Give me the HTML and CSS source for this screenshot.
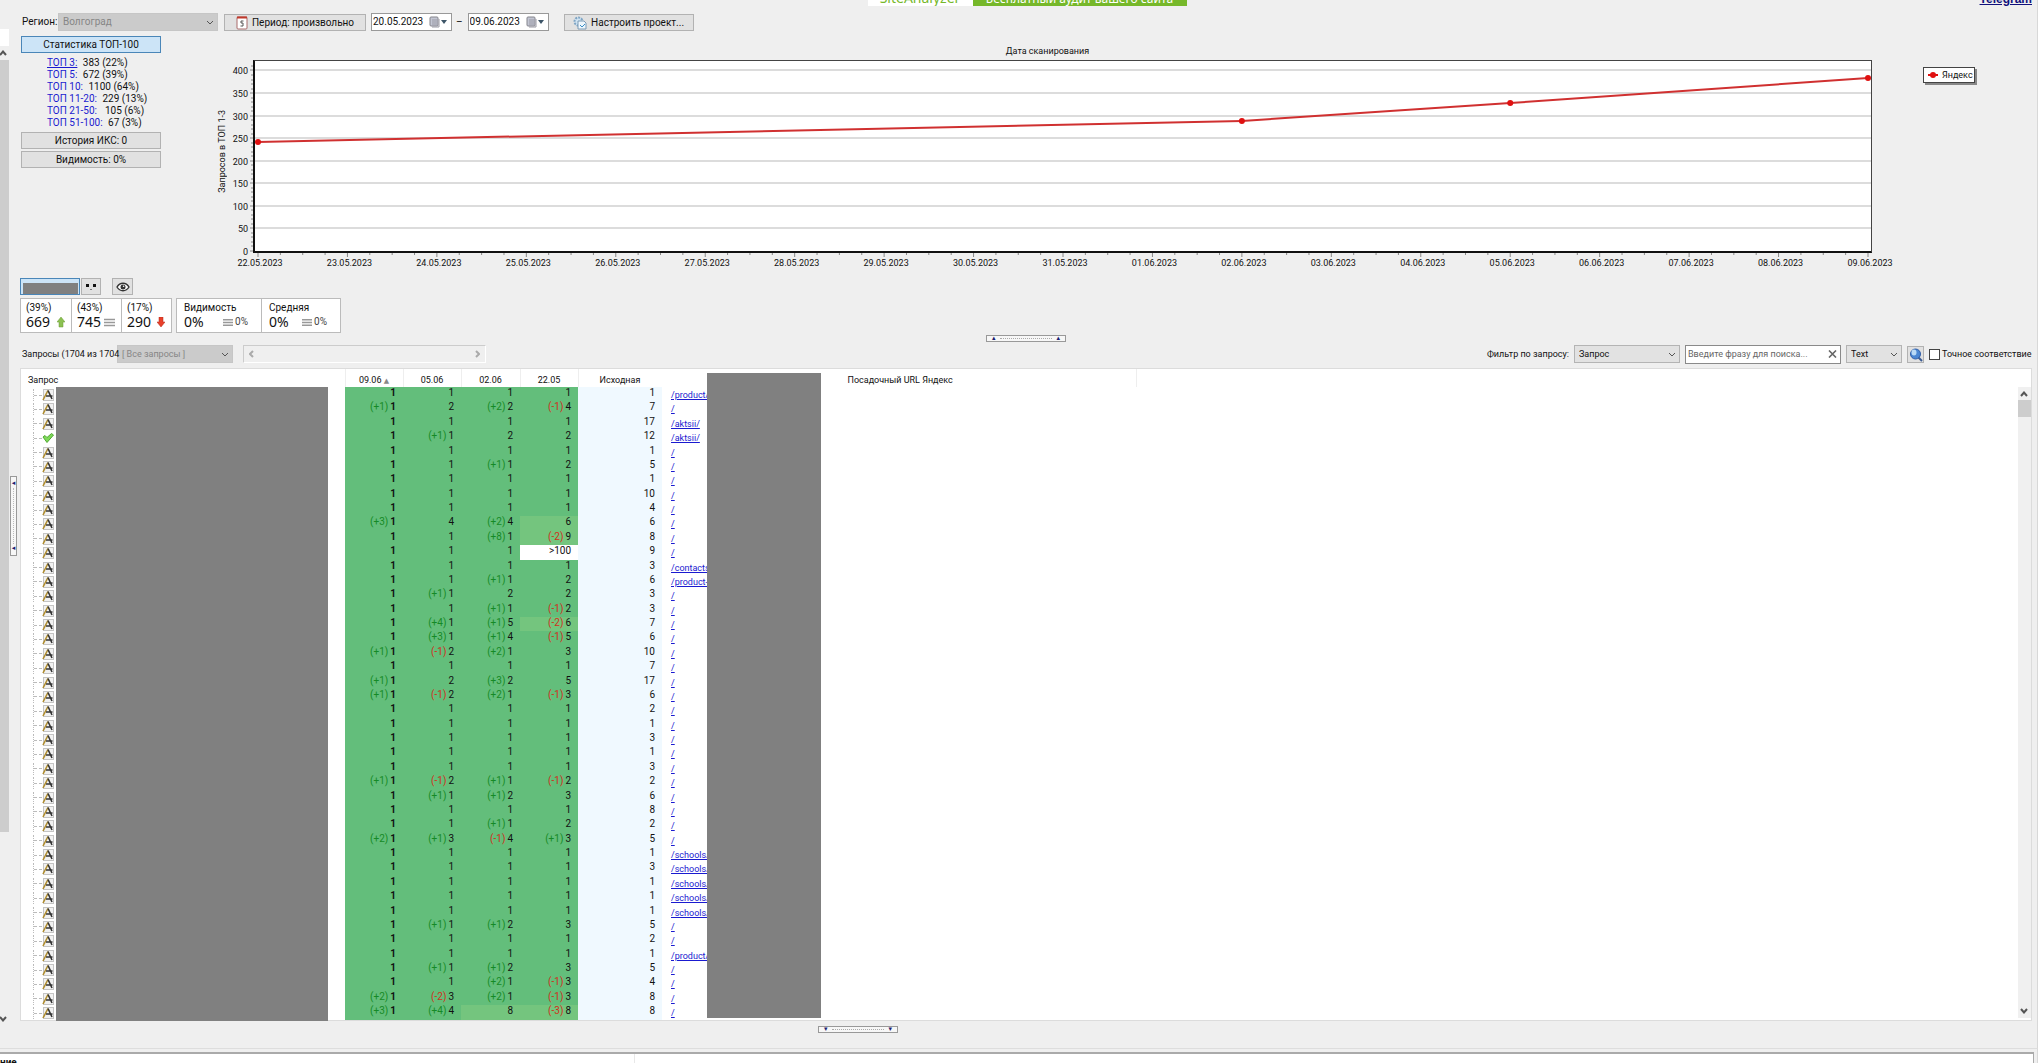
FILE: index.html
```html
<!DOCTYPE html>
<html lang="ru">
<head>
<meta charset="utf-8">
<title>SiteAnalyzer</title>
<link rel="stylesheet" href="styles.css">
</head>
<body>
<main class="page">
  <aside class="gutter">
    <div class="vscroll">
      <div class="vscroll-head"></div>
      <svg class="chev" viewBox="0 0 8 6"><path d="M0 5l3-3.500L6 5" /></svg>
      <div class="vscroll-thumb"></div>
      <svg class="chev" viewBox="0 0 8 6"><path d="M0 1l3 3.500L6 1" /></svg>
    </div>
    <button class="grip grip-v" aria-label="Свернуть панель"><i>◂</i><b></b><i>◂</i></button>
  </aside>

  <div class="work">
    <header class="banner">
      <span class="banner-name"><span>SiteAnalyzer</span></span>
      <span class="banner-text"><span>Бесплатный аудит вашего сайта</span></span>
      <a class="telegram" href="#">Telegram</a>
    </header>

    <div class="toolbar">
      <label for="region">Регион:</label>
      <select id="region" class="region" disabled><option>Волгоград</option></select>
      <button class="btn period">
        <svg width="12" height="14" viewBox="0 0 12 14"><rect x="1" y="1" width="10" height="12" rx="1" fill="#fff" stroke="#a86a6a"/><path d="M1 1.500h10" stroke="#c0392b" stroke-width="2"/><path d="M7.500 5H5v2h2v3H4.500" fill="none" stroke="#555"/></svg>
        Период: произвольно</button>
      <span class="date"><input aria-label="Начало периода" value="20.05.2023"><svg width="20" height="12" viewBox="0 0 20 12"><rect x="1" y="1" width="8" height="9" rx="1" fill="#c3c6d3" stroke="#85858d"/><path d="M3 11h7V3M3 4h5M3 6h5M3 8h5" fill="none" stroke="#9a9aa5"/><path d="M12 4h6l-3 4z" fill="#3d5568"/></svg></span>
      <span class="dash">–</span>
      <span class="date"><input aria-label="Конец периода" value="09.06.2023"><svg width="20" height="12" viewBox="0 0 20 12"><rect x="1" y="1" width="8" height="9" rx="1" fill="#c3c6d3" stroke="#85858d"/><path d="M3 11h7V3M3 4h5M3 6h5M3 8h5" fill="none" stroke="#9a9aa5"/><path d="M12 4h6l-3 4z" fill="#3d5568"/></svg></span>
      <button class="btn project">
        <svg width="14" height="14" viewBox="0 0 14 14"><circle cx="5.500" cy="5.500" r="4" fill="#cfe3f2" stroke="#7fa5c4" stroke-width="2" stroke-dasharray="2 1"/><path d="M5 5h6l2 2v6H5z" fill="#eef6fc" stroke="#7b9ab5"/><path d="M7 9l2 2 3-3" fill="none" stroke="#3a8fc8"/></svg>
        Настроить проект...</button>
    </div>

    <section class="top">
      <div class="side">
        <button class="btn active">Статистика ТОП-100</button>
        <ul class="tops">
          <li><a href="#" class="current">ТОП 3:</a> 383 (22%)</li>
          <li><a href="#">ТОП 5:</a> 672 (39%)</li>
          <li><a href="#">ТОП 10:</a> 1100 (64%)</li>
          <li><a href="#">ТОП 11-20:</a> 229 (13%)</li>
          <li><a href="#">ТОП 21-50:</a> &nbsp;105 (6%)</li>
          <li><a href="#">ТОП 51-100:</a> 67 (3%)</li>
        </ul>
        <button class="btn">История ИКС: 0</button>
        <button class="btn">Видимость: 0%</button>
      </div>
      <figure class="chart">
        <figcaption>Дата сканирования</figcaption>
        <span class="ytitle">Запросов в ТОП 1-3</span>
        <div class="plot">
          <svg class="grid" id="grid"></svg>
          <svg class="series" id="series"></svg>
        </div>
        <div class="legend"><svg width="10" height="8" viewBox="0 0 10 8"><path d="M0 4h10" stroke="#e01010" stroke-width="2"/><circle cx="5" cy="4" r="3" fill="#e01010"/></svg>Яндекс</div>
      </figure>
    </section>

    <div class="tabs">
      <button class="btn active redacted" aria-label="Поисковая система"><span></span></button>
      <button class="btn dots" aria-label="Ещё"><svg width="12" height="8" viewBox="0 0 12 8"><path d="M1 1h3v3H1zM8 1h3v3H8zM5.500 6h1v1h-1z" fill="#111"/></svg></button>
      <button class="btn eye" aria-label="Показать"><svg width="14" height="10" viewBox="0 0 14 10"><path d="M1 5c3-5 9-5 12 0c-3 5-9 5-12 0z" fill="#fff" stroke="#333" stroke-width="1.400"/><circle cx="7" cy="5" r="2.500" fill="#333"/><circle cx="7.600" cy="4.300" r=".8" fill="#fff"/></svg></button>
    </div>

    <div class="cards">
      <dl class="card trio">
        <div><dt>(39%)</dt><dd>669 <svg width="8" height="11" viewBox="0 0 8 11"><path d="M4 0l4 5H6v5H2V5H0z" fill="#8cc152" stroke="#6b9b37" stroke-width=".5"/></svg></dd></div>
        <div><dt>(43%)</dt><dd>745 <svg width="11" height="9" viewBox="0 0 11 9"><path d="M0 1.500h11M0 4.500h11M0 7.500h11" stroke="#999" stroke-width="1.500"/></svg></dd></div>
        <div><dt>(17%)</dt><dd>290 <svg width="8" height="11" viewBox="0 0 8 11"><path d="M4 10l4-5H6V0H2v5H0z" fill="#e8402a" stroke="#b02a1a" stroke-width=".5"/></svg></dd></div>
      </dl>
      <dl class="card duo">
        <div><dt>Видимость</dt><dd>0% <small><svg width="10" height="9" viewBox="0 0 11 9"><path d="M0 1.500h11M0 4.500h11M0 7.500h11" stroke="#999" stroke-width="1.500"/></svg>0%</small></dd></div>
        <div><dt>Средняя</dt><dd>0% <small><svg width="10" height="9" viewBox="0 0 11 9"><path d="M0 1.500h11M0 4.500h11M0 7.500h11" stroke="#999" stroke-width="1.500"/></svg>0%</small></dd></div>
      </dl>
    </div>

    <button class="grip grip-h grip-top" aria-label="Свернуть график"><i>▴</i><b></b><i>▴</i></button>

    <div class="filters">
      <label class="count" for="group">Запросы (1704 из 1704</label>
      <select id="group" class="group" disabled><option>[ Все запросы ]</option></select>
      <div class="hscroll"><svg width="5" height="8" viewBox="0 0 5 8"><path d="M4 1L1 4l3 3"/></svg><svg width="5" height="8" viewBox="0 0 5 8"><path d="M1 1l3 3-3 3"/></svg></div>
      <label class="by" for="field">Фильтр по запросу:</label>
      <select id="field" class="field"><option>Запрос</option></select>
      <span class="search"><input aria-label="Фраза для поиска" placeholder="Введите фразу для поиска..."><button aria-label="Очистить"><svg width="9" height="8" viewBox="0 0 9 8"><path d="M1 0.500l7 7M8 0.500l-7 7" stroke="#666" stroke-width="1.600"/></svg></button></span>
      <select class="mode" aria-label="Режим"><option>Text</option></select>
      <button class="btn find" aria-label="Найти"><svg width="14" height="14" viewBox="0 0 14 14"><path d="M9 9l4 4" stroke="#3b5b92" stroke-width="2"/><circle cx="6.500" cy="6" r="5" fill="#4b86d2" stroke="#2f5da8"/><ellipse cx="5" cy="4.500" rx="2.500" ry="3" fill="#b9d9f6"/></svg></button>
      <label class="exact"><input type="checkbox">Точное соответствие</label>
    </div>

    <section class="panel">
      <table>
        <colgroup><col class="c-query"><col class="c-pos"><col class="c-pos"><col class="c-pos-wide"><col class="c-pos"><col class="c-src"><col class="c-url"><col class="c-land"><col></colgroup>
        <thead><tr><th class="left">Запрос</th><th>09.06 <span class="sort">▲</span></th><th>05.06</th><th>02.06</th><th>22.05</th><th class="src-head">Исходная</th><th></th><th class="left">Посадочный URL Яндекс</th><th></th></tr></thead>
        <tbody id="rows"></tbody>
      </table>
      <div class="pscroll">
        <svg class="chev" viewBox="0 0 8 6"><path d="M1 5l3-3.500L7 5" /></svg>
        <div class="pscroll-thumb"></div>
        <svg class="chev" viewBox="0 0 8 6"><path d="M1 1l3 3.500L7 1" /></svg>
      </div>
      <div class="mask mask-query"></div>
      <div class="mask mask-url"></div>
    </section>

    <button class="grip grip-h grip-bottom" aria-label="Свернуть таблицу"><i>▾</i><b></b><i>▾</i></button>
  </div>
</main>
<footer class="bottom"><span>ние</span></footer>
<script src="app.js"></script>
</body>
</html>
```
FILE: styles.css
```css
* { box-sizing: border-box; }

body {
  margin: 0;
  height: 100vh;
  min-height: 1000px;
  display: flex;
  flex-direction: column;
  overflow: hidden;
  background: #efefef;
  color: #111;
  font: 10px/12px Roboto, "Liberation Sans", sans-serif;
}

button, select, input { font: inherit; color: inherit; margin: 0; }
svg { display: block; flex: none; }
ul, dl, dd, figure { margin: 0; padding: 0; }
a { color: #1a1ad0; }

.page { flex: 1; min-height: 0; display: flex; border-right: 1px solid #d8d8d8; }

/* left gutter */
.gutter { width: 20px; display: flex; align-items: center; }
.vscroll { width: 9px; height: 100%; padding-bottom: 26px; display: flex; flex-direction: column; }
.vscroll-head { height: 17px; margin: 29px 0 4px; background: #fff; }
.vscroll-thumb { height: 772px; margin: 4px 0 auto; background: #cdcdcd; }
.chev { width: 8px; height: 6px; fill: none; stroke: #555; stroke-width: 2; }

.grip { display: flex; align-items: center; justify-content: space-between; padding: 0; border: 1px solid #999; background: #f7f7f7; color: #1d1d70; }
.grip i { font: 7px/5px "DejaVu Sans", sans-serif; }
.grip b { flex: 1; }
.grip-v { flex-direction: column; width: 7px; height: 80px; margin: 0 0 16px 1px; padding: 4px 0; }
.grip-v b { border-left: 1px dotted #bbb; margin: 2px 0; }
.grip-h { width: 80px; height: 7px; padding: 0 5px; }
.grip-h b { border-top: 1px dotted #aaa; margin: 0 4px; }
.grip-top { align-self: center; margin: 2px 0 3px; }
.grip-bottom { margin: 5px 0 15px 798px; flex: none; }

.work { flex: 1; min-width: 0; display: flex; flex-direction: column; padding-right: 5px; }

/* banner */
.banner { position: relative; height: 6px; padding-left: 2px; display: flex; justify-content: center; align-items: flex-end; overflow: hidden; }
.banner-name, .banner-text { height: 6px; display: flex; align-items: flex-end; justify-content: center; font: 14px/16px "Noto Sans", sans-serif; }
.banner-name { width: 105px; background: #fff; color: #76b82a; }
.banner-text { width: 214px; background: #76b82a; color: #fff; font: 12px/14px "Noto Sans", sans-serif; }
.telegram { position: absolute; right: 0; bottom: 0; font: bold 12px/14px "Liberation Sans", sans-serif; color: #11117c; }

/* toolbar */
.toolbar { display: flex; align-items: center; height: 18px; margin-top: 7px; padding-left: 2px; }
.toolbar label { width: 36px; }
select { appearance: none; height: 18px; padding: 0 4px; border: 1px solid #b4b4b4; border-radius: 0; background: #e2e2e2 url("data:image/svg+xml,%3Csvg xmlns='http://www.w3.org/2000/svg' width='8' height='5'%3E%3Cpath d='M1 1l3 3 3-3' fill='none' stroke='%23555'/%3E%3C/svg%3E") no-repeat right 3px center; }
select:disabled { border-color: #c6c6c6; background-color: #cbcbcb; color: #868686; opacity: 1; }
.region { width: 160px; }
.btn { display: flex; align-items: center; justify-content: center; gap: 4px; height: 17px; padding: 1px 0 0; border: 1px solid #b2b2b2; border-radius: 0; background: #e1e1e1; }
.period { width: 142px; margin-left: 6px; }
.date { display: flex; flex: none; align-items: center; width: 81px; height: 18px; margin-left: 5px; border: 1px solid #999; background: #fff; }
.date input { width: 57px; min-width: 0; padding: 0 1px; border: 0; background: none; }
.dash { margin-left: 4px; }
.project { width: 130px; margin-left: 15px; }

/* statistics and chart */
.top { display: flex; margin-top: 5px; height: 242px; }
.side { width: 141px; padding-left: 1px; }
.side .btn { width: 100%; margin-bottom: 2px; }
.btn.active { background: #cce4f7; border-color: #4a86b8; }
.tops { list-style: none; padding: 2px 0 3px 26px; }
.tops a { text-decoration: none; margin-right: 3px; }
.tops .current { text-decoration: underline; }

.chart { flex: 1; min-width: 0; display: grid; grid-template-columns: 16px 1fr 52px; grid-template-rows: 24px 193px; padding: 0 57px 0 51px; }
.chart figcaption { grid-column: 2; justify-self: center; padding: 9px 56px 0 0; font-size: 9px; }
.ytitle { grid-area: 2 / 1; justify-self: end; writing-mode: vertical-rl; transform: rotate(180deg); align-self: start; margin-top: 50px; font-size: 9px; }
.plot { grid-area: 2 / 2; display: grid; margin: 0 51px 0 25px; border: 1px solid #444; border-width: 1px 1px 2px 2px; border-left-color: #111; border-bottom-color: #111; background: #fff; }
.plot svg { grid-area: 1 / 1; width: 100%; height: 190px; overflow: visible; }
.plot .series { width: auto; margin: 0 3px; justify-self: stretch; }
.grid line { stroke: #dcdcdc; stroke-width: 2; }
.series .tick { stroke: #888; }
.series .trend { stroke: #d03030; stroke-width: 2; }
.series circle { fill: #e01010; }
.series text { fill: #111; font-size: 9px; }
.legend { grid-area: 2 / 3; display: flex; align-items: center; gap: 4px; height: 16px; margin-top: 7px; padding-left: 4px; border: 1px solid #444; background: #fff; box-shadow: 2px 2px 0 #888; font-size: 9px; }

/* tabs */
.tabs { display: flex; height: 17px; }
.redacted { width: 60px; padding: 4px 1px 0 2px; }
.redacted span { flex: 1; height: 11px; background: #808080; }
.dots { width: 20px; margin-left: 1px; }
.eye { width: 21px; margin-left: 11px; }

/* score cards */
.cards { display: flex; gap: 4px; margin-top: 3px; }
.card { display: flex; height: 35px; border: 1px solid #bbb; background: #fff; }
.card > div { padding: 3px 5px 1px; }
.card > div + div { border-left: 1px solid #bbb; }
.trio > div { width: 50px; padding-right: 6px; }
.duo > div { width: 84px; padding-left: 7px; }
.duo > div + div { width: 79px; }
.card dd { display: flex; align-items: center; justify-content: space-between; font: 14px/16px "Noto Sans", sans-serif; color: #111; }
.card small { display: flex; align-items: center; gap: 2px; padding-right: 8px; font: 10px/12px Roboto, "Liberation Sans", sans-serif; color: #444; }

/* filters */
.filters { display: flex; align-items: center; height: 18px; font-size: 9px; }
.count { width: 97px; padding-left: 2px; white-space: nowrap; }
.group { width: 116px; }
.hscroll { display: flex; align-items: center; justify-content: space-between; width: 243px; height: 18px; margin-left: 10px; padding: 0 5px; border: 1px solid; border-color: #ccc #fff #fff #ccc; }
.hscroll path { fill: none; stroke: #aaa; stroke-width: 2; }
.by { margin-left: auto; margin-right: 5px; }
.field { width: 106px; }
.search { display: flex; align-items: center; width: 156px; height: 19px; margin: 0 5px; border: 1px solid #8a8a8a; background: #fff; }
.search input { flex: 1; min-width: 0; padding: 0 2px; border: 0; background: none; }
.search input::placeholder { color: #666; opacity: 1; }
.search button { padding: 0 3px; border: 0; background: none; }
.mode { width: 56px; }
.find { width: 17px; margin: 0 5px; }
.exact { display: flex; align-items: center; gap: 2px; width: 103px; white-space: nowrap; }
.exact input { flex: none; appearance: none; width: 11px; height: 11px; border: 1px solid #444; background: #fff; }
.filters .count { position: relative; z-index: 1; }

/* table */
.panel { position: relative; flex: 1; min-height: 0; margin-top: 5px; display: flex; border: 1px solid #dcdcdc; background: #fff; }
table { flex: 1; min-width: 0; height: 100%; table-layout: fixed; border-collapse: collapse; }
.c-query { width: 324px; }
.c-pos { width: 58px; }
.c-pos-wide { width: 59px; }
.c-src { width: 84px; }
.c-url { width: 178px; }
.c-land { width: 296px; }
th { height: 18px; padding: 4px 0 0; font-size: 9px; font-weight: normal; border-right: 1px solid #eee; white-space: nowrap; }
th:last-child, th:nth-child(7), th.src-head { border-right-color: #fff; }
th.left { text-align: left; padding-left: 7px; }
.sort { font: 7px/8px "DejaVu Sans", sans-serif; color: #888; }
td { padding: 0; vertical-align: top; white-space: nowrap; overflow: hidden; }
.pos, .src { text-align: right; padding: 0 7px 2px 0; }
.pos { background: #63be7b; color: #111; }
.pos.mid { background: #74c57e; }
.pos.out { background: #fff; }
.pos.now { font-weight: bold; }
.pos i { font: inherit; font-weight: normal; color: #158a25; margin-right: 2px; }
.pos i.down { color: #d0301c; }
.src { background: #f0f9ff; }
.url { padding: 2px 0 0 9px; font-size: 9px; }
.node { padding: 2px 0 0 12px; }
.node > span { display: flex; align-items: center; height: 12px; border-left: 1px dotted #bbb; }
.node > span::before { content: ""; width: 8px; border-top: 1px dashed #bbb; }
.pscroll { width: 13px; margin: 18px 0 2px; padding: 4px 2px; display: flex; flex-direction: column; background: #f0f0f0; }
.pscroll-thumb { height: 17px; margin: 3px -2px auto; background: #cdcdcd; }
.mask { position: absolute; background: #808080; }
.mask-query { left: 35px; top: 18px; bottom: -1px; width: 272px; }
.mask-url { left: 686px; top: 4px; bottom: 2px; width: 114px; }

/* next panel */
.bottom { flex: none; height: 15px; border-top: 1px solid #ddd; padding-right: 3px; border-right: 1px solid #d8d8d8; overflow: hidden; }
.bottom span { display: block; width: 100%; height: 20px; margin-top: 3px; padding-top: 3px; border: 1px solid #aaa; border-width: 2px 1px 0 0; background: linear-gradient(#e8e8e8, #e8e8e8) 634px 0 / 1px 100% no-repeat #fff; font-weight: bold; }
```
FILE: app.js
```js
const NS = 'http://www.w3.org/2000/svg';
function add(parent, tag, attrs, text) {
  const el = document.createElementNS(NS, tag);
  for (const key in attrs) el.setAttribute(key, attrs[key]);
  if (text !== undefined) el.textContent = text;
  parent.appendChild(el);
}

// chart
const HEIGHT = 190, DAYS = 18, MAX = 421;
const yOf = v => Math.round(HEIGHT - v * HEIGHT / MAX);
const xOf = d => (d / DAYS * 100) + '%';
const grid = document.getElementById('grid');
const series = document.getElementById('series');

for (let v = 0; v <= 400; v += 50) {
  if (v) add(grid, 'line', { x1: 0, x2: '100%', y1: yOf(v), y2: yOf(v) });
  add(series, 'text', { x: -10, y: yOf(v) + 4, 'text-anchor': 'end' }, v);
}
for (let v = 0; v <= 410; v += 10) {
  add(series, 'line', { class: 'tick', x1: v % 50 ? -7 : -8, x2: -5, y1: yOf(v), y2: yOf(v) });
}
for (let q = 0; q <= DAYS * 4; q++) {
  add(series, 'line', { class: 'tick', x1: xOf(q / 4), x2: xOf(q / 4), y1: 192, y2: q % 4 ? 194 : 196 });
}
for (let d = 0; d <= DAYS; d++) {
  const label = new Date(Date.UTC(2023, 4, 22 + d)).toISOString().slice(0, 10).split('-').reverse().join('.');
  add(series, 'text', { x: xOf(d), dx: 2, y: 205, 'text-anchor': 'middle' }, label);
}
const points = [[0, 242], [11, 289], [14, 327], [18, 383]];
points.forEach((p, i) => {
  const n = points[i + 1];
  if (n) add(series, 'line', { class: 'trend', x1: xOf(p[0]), y1: yOf(p[1]), x2: xOf(n[0]), y2: yOf(n[1]) });
});
points.forEach(p => add(series, 'circle', { cx: xOf(p[0]), cy: yOf(p[1]), r: 3 }));

// table: four positions with their change, source position, url
const data = `1|1|1|1|1|/product/
+1 1|2|+2 2|-1 4|7|/
1|1|1|1|17|/aktsii/
1|+1 1|2|2|12|/aktsii/
1|1|1|1|1|/
1|1|+1 1|2|5|/
1|1|1|1|1|/
1|1|1|1|10|/
1|1|1|1|4|/
+3 1|4|+2 4|6|6|/
1|1|+8 1|-2 9|8|/
1|1|1|>100|9|/
1|1|1|1|3|/contacts
1|1|+1 1|2|6|/product-
1|+1 1|2|2|3|/
1|1|+1 1|-1 2|3|/
1|+4 1|+1 5|-2 6|7|/
1|+3 1|+1 4|-1 5|6|/
+1 1|-1 2|+2 1|3|10|/
1|1|1|1|7|/
+1 1|2|+3 2|5|17|/
+1 1|-1 2|+2 1|-1 3|6|/
1|1|1|1|2|/
1|1|1|1|1|/
1|1|1|1|3|/
1|1|1|1|1|/
1|1|1|1|3|/
+1 1|-1 2|+1 1|-1 2|2|/
1|+1 1|+1 2|3|6|/
1|1|1|1|8|/
1|1|+1 1|2|2|/
+2 1|+1 3|-1 4|+1 3|5|/
1|1|1|1|1|/schools/
1|1|1|1|3|/schools/
1|1|1|1|1|/schools/
1|1|1|1|1|/schools/
1|1|1|1|1|/schools/
1|+1 1|+1 2|3|5|/
1|1|1|1|2|/
1|1|1|1|1|/product/
1|+1 1|+1 2|3|5|/
1|1|+2 1|-1 3|4|/
+2 1|-2 3|+2 1|-1 3|8|/
+3 1|+4 4|8|-3 8|8|/`;

const LETTER = '<svg width="12" height="12" viewBox="0 0 12 12"><rect x="1.500" y=".5" width="10" height="11" fill="#f1f1f1" stroke="#c4c4c4"/><path d="M6 1.500L1 11" stroke="#b08d2e" stroke-width="1.600"/><path d="M6 1.500l4 8.500M4 7h6.500" fill="none" stroke="#333" stroke-width="1.600"/></svg>';
const CHECK = '<svg width="12" height="12" viewBox="0 0 12 12"><path d="M1 5l2-1.500 2 2L9.500 1.500 11.500 3 5 10.500z" fill="#7ed957" stroke="#4fa832"/></svg>';

function position(value, index) {
  const parts = value.split(' ');
  const rank = parts.pop();
  let cls = 'pos';
  if (index === 0) cls += ' now';
  if (rank === '>100') cls += ' out';
  else if (Number(rank) > 5) cls += ' mid';
  const change = parts.length ? `<i${parts[0][0] === '-' ? ' class="down"' : ''}>(${parts[0]})</i>` : '';
  return `<td class="${cls}">${change}${rank.replace('>', '&gt;')}</td>`;
}

document.getElementById('rows').innerHTML = data.split('\n').map((line, i) => {
  const cells = line.split('|');
  return `<tr><td class="node"><span>${i === 3 ? CHECK : LETTER}</span></td>` +
    cells.slice(0, 4).map(position).join('') +
    `<td class="src">${cells[4]}</td><td class="url"><a href="#">${cells[5]}</a></td><td></td><td></td></tr>`;
}).join('');
```
